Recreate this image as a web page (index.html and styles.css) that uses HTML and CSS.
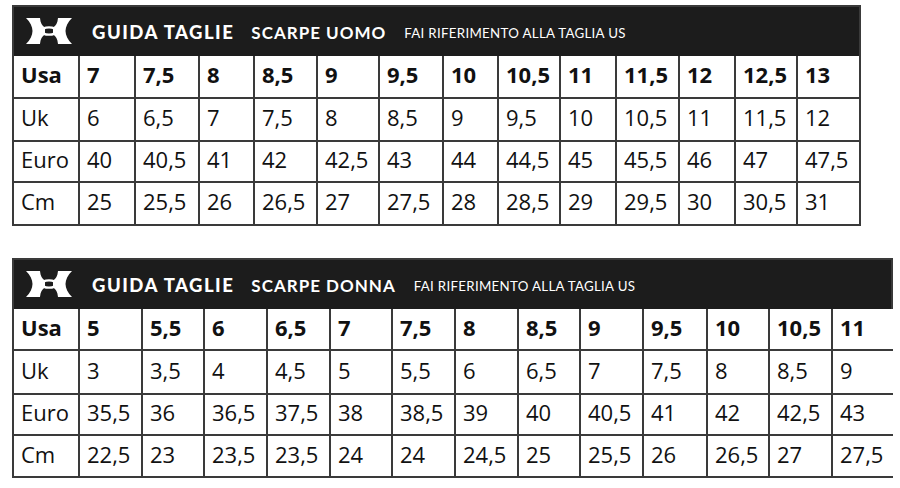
FILE: index.html
```html
<!DOCTYPE html>
<html lang="it">
<head>
<meta charset="utf-8">
<title>Guida taglie</title>
<link rel="stylesheet" href="styles.css">
</head>
<body>
<div class="page">
  <section class="chart chart-men">
    <div class="bar">
      <svg class="logo" viewBox="0 0 46 26" aria-hidden="true">
        <path d="M0,0 H14 C14.5,5 16,8 19,9.5 L19,16.5 C16,18 14.5,21 14,26 H0 C4,22 6.5,17.5 6.5,13 C6.5,8.5 4,4 0,0 Z"/>
        <path d="M46,0 H32 C31.5,5 30,8 27,9.5 L27,16.5 C30,18 31.5,21 32,26 H46 C42,22 39.5,17.5 39.5,13 C39.5,8.5 42,4 46,0 Z"/>
        <ellipse cx="23" cy="13" rx="7.6" ry="3.6" fill="none" stroke="#fff" stroke-width="2.4"/>
      </svg>
      <span class="t1">GUIDA TAGLIE</span>
      <span class="t2">SCARPE UOMO</span>
      <span class="t3">FAI RIFERIMENTO ALLA TAGLIA US</span>
    </div>
    <div class="grid">
      <div class="c b">Usa</div><div class="c b">7</div><div class="c b">7,5</div><div class="c b">8</div><div class="c b">8,5</div><div class="c b">9</div><div class="c b">9,5</div><div class="c b">10</div><div class="c b">10,5</div><div class="c b">11</div><div class="c b">11,5</div><div class="c b">12</div><div class="c b">12,5</div><div class="c b">13</div>
      <div class="c">Uk</div><div class="c">6</div><div class="c">6,5</div><div class="c">7</div><div class="c">7,5</div><div class="c">8</div><div class="c">8,5</div><div class="c">9</div><div class="c">9,5</div><div class="c">10</div><div class="c">10,5</div><div class="c">11</div><div class="c">11,5</div><div class="c">12</div>
      <div class="c">Euro</div><div class="c">40</div><div class="c">40,5</div><div class="c">41</div><div class="c">42</div><div class="c">42,5</div><div class="c">43</div><div class="c">44</div><div class="c">44,5</div><div class="c">45</div><div class="c">45,5</div><div class="c">46</div><div class="c">47</div><div class="c">47,5</div>
      <div class="c">Cm</div><div class="c">25</div><div class="c">25,5</div><div class="c">26</div><div class="c">26,5</div><div class="c">27</div><div class="c">27,5</div><div class="c">28</div><div class="c">28,5</div><div class="c">29</div><div class="c">29,5</div><div class="c">30</div><div class="c">30,5</div><div class="c">31</div>
    </div>
  </section>

  <section class="chart chart-women">
    <div class="bar">
      <svg class="logo" viewBox="0 0 46 26" aria-hidden="true">
        <path d="M0,0 H14 C14.5,5 16,8 19,9.5 L19,16.5 C16,18 14.5,21 14,26 H0 C4,22 6.5,17.5 6.5,13 C6.5,8.5 4,4 0,0 Z"/>
        <path d="M46,0 H32 C31.5,5 30,8 27,9.5 L27,16.5 C30,18 31.5,21 32,26 H46 C42,22 39.5,17.5 39.5,13 C39.5,8.5 42,4 46,0 Z"/>
        <ellipse cx="23" cy="13" rx="7.6" ry="3.6" fill="none" stroke="#fff" stroke-width="2.4"/>
      </svg>
      <span class="t1">GUIDA TAGLIE</span>
      <span class="t2">SCARPE DONNA</span>
      <span class="t3">FAI RIFERIMENTO ALLA TAGLIA US</span>
    </div>
    <div class="grid">
      <div class="c b">Usa</div><div class="c b">5</div><div class="c b">5,5</div><div class="c b">6</div><div class="c b">6,5</div><div class="c b">7</div><div class="c b">7,5</div><div class="c b">8</div><div class="c b">8,5</div><div class="c b">9</div><div class="c b">9,5</div><div class="c b">10</div><div class="c b">10,5</div><div class="c b">11</div>
      <div class="c">Uk</div><div class="c">3</div><div class="c">3,5</div><div class="c">4</div><div class="c">4,5</div><div class="c">5</div><div class="c">5,5</div><div class="c">6</div><div class="c">6,5</div><div class="c">7</div><div class="c">7,5</div><div class="c">8</div><div class="c">8,5</div><div class="c">9</div>
      <div class="c">Euro</div><div class="c">35,5</div><div class="c">36</div><div class="c">36,5</div><div class="c">37,5</div><div class="c">38</div><div class="c">38,5</div><div class="c">39</div><div class="c">40</div><div class="c">40,5</div><div class="c">41</div><div class="c">42</div><div class="c">42,5</div><div class="c">43</div>
      <div class="c">Cm</div><div class="c">22,5</div><div class="c">23</div><div class="c">23,5</div><div class="c">23,5</div><div class="c">24</div><div class="c">24</div><div class="c">24,5</div><div class="c">25</div><div class="c">25,5</div><div class="c">26</div><div class="c">26,5</div><div class="c">27</div><div class="c">27,5</div>
    </div>
  </section>
</div>
</body>
</html>
```

FILE: styles.css
```css
html, body {
  margin: 0;
  padding: 0;
  background: #fff;
}

.page {
  padding: 5px 0 0 12px;
  display: flex;
  flex-direction: column;
  align-items: flex-start;
  gap: 32px;
}

.chart {
  border: 2px solid #3a3a3a;
  background: #3a3a3a;
}

.chart-men { width: 845px; }
.chart-women { width: 877px; }

.bar {
  height: 49px;
  background: #1c1c1c;
  display: flex;
  align-items: center;
  padding-left: 12px;
  color: #fff;
  box-sizing: border-box;
  padding-bottom: 1px;
}

.logo {
  width: 46px;
  height: 26px;
  fill: #fff;
  margin-right: 20px;
  flex: none;
}

.t1 {
  font-family: "Lato", "DejaVu Sans", sans-serif;
  font-weight: 900;
  font-size: 18.5px;
  letter-spacing: 1.5px;
  margin-right: 17px;
  margin-top: 2px;
}

.t2 {
  font-family: "Lato", "DejaVu Sans", sans-serif;
  font-weight: 700;
  font-size: 17px;
  letter-spacing: 1px;
  margin-right: 18px;
  margin-top: 2px;
}

.t3 {
  font-family: "Lato", "DejaVu Sans", sans-serif;
  font-weight: 400;
  font-size: 13.3px;
  letter-spacing: 0.3px;
  margin-top: 3px;
}

.grid {
  display: grid;
  gap: 2px;
}

.chart-men .grid {
  grid-template-columns: 64px 54px 62px 53px 61px 60px 62px 53px 60px 54px 61px 54px 60px 61px;
  grid-template-rows: 41px 41px 39px 41px;
}

.chart-women .grid {
  grid-template-columns: 64px 61px 60px 61px 61px 60px 61px 61px 60px 61px 62px 60px 61px 60px;
  grid-template-rows: 40px 42px 39px 40px;
}

.c {
  background: #fff;
  font-family: "Open Sans", "Noto Sans", sans-serif;
  font-size: 22px;
  color: #111;
  display: flex;
  align-items: center;
  padding: 0 0 5px 7px;
  box-sizing: border-box;
  white-space: nowrap;
}

.c.b {
  font-weight: 700;
}
```
